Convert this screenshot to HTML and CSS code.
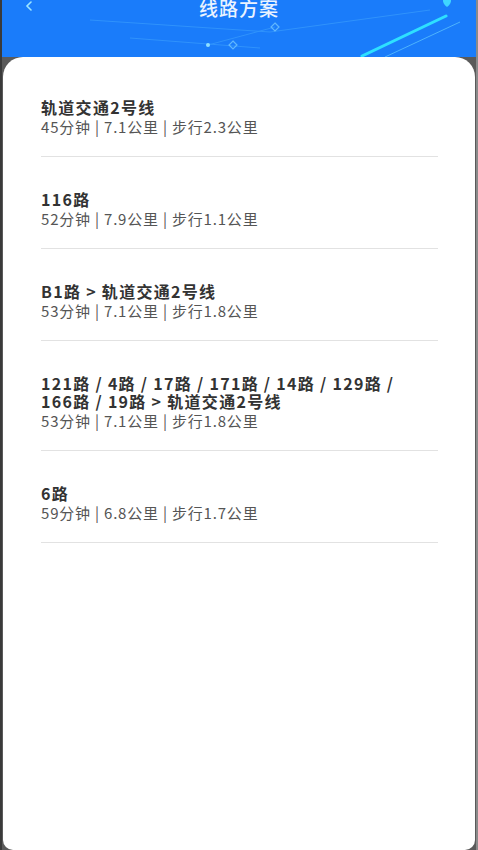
FILE: index.html
```html
<!DOCTYPE html>
<html lang="zh-CN">
<head>
    <meta charset="UTF-8">
    <meta name="viewport" content="width=device-width, initial-scale=1.0">
    <title>线路方案</title>
    <link rel="stylesheet" href="styles.css">
</head>
<body>
    <div class="page">
        <header class="header">
            <svg class="header-art" width="478" height="57" viewBox="0 0 478 57">
                <g stroke="#4fb4ff" stroke-width="1" fill="none" opacity="0.4">
                    <path d="M90 20 L270 32 L430 10"/>
                    <path d="M130 38 L260 48"/>
                    <path d="M208 45 L275 27"/>
                </g>
                <g stroke="#7fd0ff" stroke-width="1.2" fill="none" opacity="0.7">
                    <path d="M275 23 L279 27 L275 31 L271 27 Z"/>
                    <path d="M233 41 L237 45 L233 49 L229 45 Z"/>
                </g>
                <circle cx="208" cy="45" r="2" fill="#8fe0ff"/>
                <path d="M362 56 L446 16" stroke="#2ee0ff" stroke-width="3" stroke-linecap="round"/>
                <path d="M385 57 L460 22" stroke="#6fd8ff" stroke-width="1" opacity="0.6"/>
                <path d="M447 -3 a4 4 0 0 1 4 4 c0 3 -4 6 -4 6 s-4 -3 -4 -6 a4 4 0 0 1 4 -4 z" fill="#3fd6ff"/>
            </svg>
            <div class="header-bar">
                <svg class="back" width="8" height="10" viewBox="0 0 8 10">
                    <path d="M6 1 L2 5 L6 9" stroke="#9ee6ff" stroke-width="1.6" fill="none" stroke-linecap="round"/>
                </svg>
                <h1 class="title">线路方案</h1>
            </div>
        </header>

        <main class="card">
            <ul class="routes">
                <li class="route">
                    <div class="route-name">轨道交通2号线</div>
                    <div class="route-info">45分钟 | 7.1公里 | 步行2.3公里</div>
                </li>
                <li class="route">
                    <div class="route-name">116路</div>
                    <div class="route-info">52分钟 | 7.9公里 | 步行1.1公里</div>
                </li>
                <li class="route">
                    <div class="route-name">B1路 &gt; 轨道交通2号线</div>
                    <div class="route-info">53分钟 | 7.1公里 | 步行1.8公里</div>
                </li>
                <li class="route">
                    <div class="route-name">121路 / 4路 / 17路 / 171路 / 14路 / 129路 / 166路 / 19路 &gt; 轨道交通2号线</div>
                    <div class="route-info">53分钟 | 7.1公里 | 步行1.8公里</div>
                </li>
                <li class="route">
                    <div class="route-name">6路</div>
                    <div class="route-info">59分钟 | 6.8公里 | 步行1.7公里</div>
                </li>
            </ul>
        </main>
    </div>
</body>
</html>
```

FILE: styles.css
```css
html, body {
    margin: 0;
    padding: 0;
    height: 100%;
}
body {
    background-color: #5a5a5a;
    font-family: "Noto Sans CJK SC", sans-serif;
    overflow: hidden;
}
.page {
    display: flex;
    flex-direction: column;
    height: 850px;
    border-left: 2px solid #3a3a3a;
    border-right: 2px solid #8a8a8a;
}
.header {
    position: relative;
    height: 57px;
    flex-shrink: 0;
    background-color: #1a7cfa;
    overflow: hidden;
}
.header-art {
    position: absolute;
    left: -2px;
    top: 0;
}
.header-bar {
    position: relative;
    display: flex;
    justify-content: center;
    align-items: center;
    height: 16px;
}
.back {
    position: absolute;
    left: 23px;
    top: 1px;
}
.title {
    margin: 0;
    font-size: 19px;
    font-weight: 500;
    letter-spacing: 1px;
    line-height: 22px;
    color: #eaf3ff;
}
.card {
    flex: 1;
    margin: 0 1px;
    background: #fff;
    border-radius: 20px 20px 10px 10px;
    padding-top: 8px;
}
.routes {
    list-style: none;
    margin: 0;
    padding: 0 37px 0 38px;
}
.route {
    padding: 33px 0 20px;
    border-bottom: 1px solid #e2e2e2;
}
.route-name {
    padding-right: 8px;
    font-size: 16px;
    font-weight: 700;
    line-height: 18px;
    letter-spacing: 1.3px;
    word-break: keep-all;
    color: #333;
}
.route-info {
    margin-top: 1px;
    font-size: 15px;
    line-height: 19px;
    letter-spacing: 0.8px;
    color: #555;
}
```
